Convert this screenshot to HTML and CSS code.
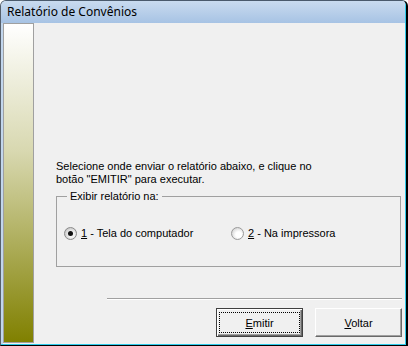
FILE: index.html
```html
<!DOCTYPE html>
<html>
<head>
    <meta charset="UTF-8">
    <title>Relatório de Convênios</title>
    <link rel="stylesheet" href="styles.css">
</head>
<body>

<div class="window">
    <div class="frame">
        <div class="titlebar">Relatório de Convênios</div>
        <div class="client">
            <div class="side"></div>
            <div class="content">
                <p class="intro">Selecione onde enviar o relatório abaixo, e clique no<br>botão "EMITIR" para executar.</p>
                <fieldset class="group">
                    <legend>Exibir relatório na:</legend>
                    <div class="options">
                        <label class="option first"><span class="radio on"></span><span><u>1</u> - Tela do computador</span></label>
                        <label class="option"><span class="radio"></span><span><u>2</u> - Na impressora</span></label>
                    </div>
                </fieldset>
                <div class="sep"></div>
                <div class="buttons">
                    <button class="btn default"><span class="focus"><span><u>E</u>mitir</span></span></button>
                    <button class="btn"><span class="focus"><span><u>V</u>oltar</span></span></button>
                </div>
            </div>
        </div>
    </div>
</div>

</body>
</html>
```

FILE: styles.css
```css
* {
    margin: 0;
    padding: 0;
    box-sizing: border-box;
}
body {
    background: #fff;
    font-family: "Liberation Sans", Arial, sans-serif;
    font-size: 11px;
    color: #000;
}
.window {
    width: 408px;
    height: 346px;
    border-top: 1px solid #4a5a6c;
    border-left: 1px solid #56606c;
    border-right: 2px solid #000;
    border-bottom: 1px solid #000;
    border-radius: 6px 6px 0 0;
    background: #c2d6ec;
    overflow: hidden;
}
.frame {
    height: 100%;
    display: flex;
    flex-direction: column;
    border-right: 1px solid #2fcbeb;
    border-bottom: 1px solid #2fcbeb;
}
.titlebar {
    height: 22px;
    flex: none;
    padding: 3px 0 0 6px;
    font-family: "Noto Sans", "Open Sans", sans-serif;
    font-size: 12px;
    line-height: 16px;
    background: linear-gradient(#c9dbef, #a7c3e4);
}
.client {
    flex: 1;
    display: flex;
    border-left: 2px solid #c2d6ec;
    background: #f0f0f0;
}
.side {
    width: 31px;
    height: 320px;
    flex: none;
    border: 1px solid #a0a0a0;
    background: linear-gradient(#ffffff, #d8d8b0 40%, #808000);
}
.content {
    flex: 1;
    padding: 137px 3px 0 22px;
}
.intro {
    line-height: 13px;
}
.group {
    margin: 4px 1px 0 0;
    padding: 0 7px 26px;
    border: 1px solid #a0a0a0;
}
.group legend {
    margin-left: 3px;
    padding: 0 3px;
    line-height: 13px;
}
.options {
    display: flex;
    height: 13px;
    margin-top: 24px;
    line-height: 13px;
}
.option {
    display: flex;
    align-items: center;
}
.option.first {
    width: 167px;
}
.radio {
    width: 13px;
    height: 13px;
    margin-right: 4px;
    border-radius: 50%;
    border: 1px solid #9a9a9a;
    background: radial-gradient(circle at 60% 60%, #fff 30%, #d4d4d4 80%);
    position: relative;
}
.radio.on {
    border-color: #8a8a8a;
    background: radial-gradient(circle at 60% 60%, #f4f4f4 30%, #c4c4c4 80%);
}
.radio.on::after {
    content: "";
    position: absolute;
    left: 3px;
    top: 3px;
    width: 5px;
    height: 5px;
    border-radius: 50%;
    background: #111;
}
.sep {
    margin: 31px 0 0 51px;
    border-top: 1px solid #a0a0a0;
    border-bottom: 1px solid #fff;
}
.buttons {
    display: flex;
    justify-content: flex-end;
    gap: 12px;
    margin-top: 8px;
}
.btn {
    width: 87px;
    height: 29px;
    padding: 3px 2px;
    font-family: "Liberation Sans", Arial, sans-serif;
    font-size: 11px;
    color: #000;
    background: #f0f0f0;
    border: 1px solid;
    border-color: #fff #696969 #696969 #fff;
    box-shadow: inset -1px -1px #a0a0a0;
}
.btn .focus {
    display: flex;
    align-items: center;
    justify-content: center;
    height: 100%;
    border: 1px dotted transparent;
}
.btn.default {
    border-color: #404040;
    box-shadow: inset 1px 1px #fff, inset -1px -1px #696969, inset -2px -2px #a0a0a0;
}
.btn.default .focus {
    border-color: #000;
}
```
